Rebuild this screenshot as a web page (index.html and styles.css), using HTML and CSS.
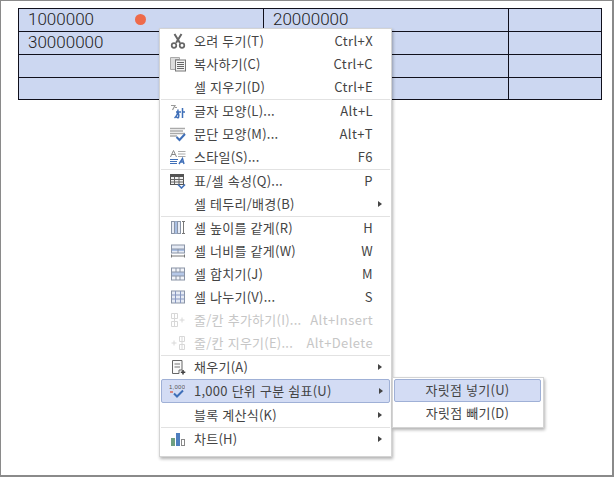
FILE: index.html
```html
<!DOCTYPE html>
<html lang="ko">
<head>
<meta charset="utf-8">
<title>표 메뉴</title>
<link rel="stylesheet" href="styles.css">
</head>
<body>
<div class="page">
  <table class="sheet">
    <tr class="r1"><td>1000000</td><td>20000000</td><td></td></tr>
    <tr class="r2"><td>30000000</td><td></td><td></td></tr>
    <tr class="r3"><td></td><td></td><td></td></tr>
    <tr class="r4"><td></td><td></td><td></td></tr>
  </table>
  <span class="dot"></span>

  <div class="menu main">
    <div class="item"><svg class="ic" viewBox="0 0 16 16"><path d="M4.500 1l5.500 9M11.500 1L6 10" stroke="#666" stroke-width="2" fill="none"/><circle cx="4" cy="12.500" r="2.300" fill="none" stroke="#666" stroke-width="1.700"/><circle cx="12" cy="12.500" r="2.300" fill="none" stroke="#666" stroke-width="1.700"/></svg><span class="lb">오려 두기(T)</span><span class="sc">Ctrl+X</span></div>
    <div class="item"><svg class="ic" viewBox="0 0 16 16"><path d="M.5 1.500h9v2h-4v10h-5z" fill="#ddd" stroke="#aaa"/><rect x="5.500" y="4" width="10" height="11" fill="#f4f4f4" stroke="#777"/><path d="M7 6.500h7M7 8.500h7M7 10.500h7M7 12.500h7" stroke="#666"/></svg><span class="lb">복사하기(C)</span><span class="sc">Ctrl+C</span></div>
    <div class="item"><span class="ic"></span><span class="lb">셀 지우기(D)</span><span class="sc">Ctrl+E</span></div>
    <div class="sep"></div>
    <div class="item"><svg class="ic" viewBox="0 0 16 16"><path d="M1 2.500h4L2.500 7M5 4.500h2" stroke="#999" fill="none" stroke-width="1.200"/><path d="M6 9h5M8 6.500c0 4-1.500 7-3.500 8.500M8 9c1 2 1 4 .5 5.500-1 .5-1.500 0-2-.5M12.500 5v10M12.500 9h2.500" stroke="#3f6fb8" fill="none" stroke-width="1.500"/></svg><span class="lb">글자 모양(L)...</span><span class="sc">Alt+L</span></div>
    <div class="item"><svg class="ic" viewBox="0 0 16 16"><path d="M0 2.500h15M0 5h13M0 7.500h15M0 10h7" stroke="#aaa" stroke-width="1.300"/><path d="M6.500 11l3 3 5.500-6" stroke="#3f6fb8" stroke-width="2" fill="none"/></svg><span class="lb">문단 모양(M)...</span><span class="sc">Alt+T</span></div>
    <div class="item"><svg class="ic" viewBox="0 0 16 16"><path d="M.5 8l3-6.500L6.500 8M2 5.500h3" stroke="#888" fill="none"/><path d="M8 2.500h7.500M8 5h7.500M8 7.500h7.500" stroke="#aaa"/><path d="M0 10.500h8M0 12.500h7M0 14.500h7" stroke="#3f6fb8"/><path d="M9 15l3.500-5.500 1.500 5.500M10.500 13h3.500" stroke="#3f6fb8" fill="none" stroke-width="1.400"/></svg><span class="lb">스타일(S)...</span><span class="sc">F6</span></div>
    <div class="sep"></div>
    <div class="item"><svg class="ic" viewBox="0 0 16 16"><rect x=".5" y="1.500" width="13" height="10" fill="#f2f2f2" stroke="#555"/><path d="M.5 1.500h13v2.500H.5z" fill="#555"/><path d="M.5 6.500h13M.5 9h13M4.500 4v7.500M9 4v7.500" stroke="#666"/><path d="M8 11.500l3.500 3.500 3.500-3.500" stroke="#3f6fb8" stroke-width="1.600" fill="none"/></svg><span class="lb">표/셀 속성(Q)...</span><span class="sc">P</span></div>
    <div class="item"><span class="ic"></span><span class="lb">셀 테두리/배경(B)</span><span class="ar"></span></div>
    <div class="sep"></div>
    <div class="item"><svg class="ic" viewBox="0 0 16 16"><rect x="1.500" y="1.500" width="9" height="12" fill="#e6ebf5" stroke="#8a94a6"/><rect x="4.500" y="1.500" width="3" height="12" fill="#a9bfe4"/><path d="M4.500 1.500v12M7.500 1.500v12" stroke="#8a94a6"/><path d="M12 1.500h3M12 13.500h3M13.500 1.500v12" stroke="#777"/></svg><span class="lb">셀 높이를 같게(R)</span><span class="sc">H</span></div>
    <div class="item"><svg class="ic" viewBox="0 0 16 16"><rect x="1.500" y="2" width="13" height="8" fill="#e6ebf5" stroke="#8a94a6"/><path d="M2 6h12v2H2z" fill="#a9bfe4"/><path d="M1.500 6h13M8 6v4" stroke="#8a94a6"/><path d="M1.500 11.500v3M14.500 11.500v3M1.500 13h13" stroke="#777"/></svg><span class="lb">셀 너비를 같게(W)</span><span class="sc">W</span></div>
    <div class="item"><svg class="ic" viewBox="0 0 16 16"><rect x="1.500" y="2" width="13" height="12" fill="#f3f5fa" stroke="#8a94a6"/><path d="M2 6h12v4H2z" fill="#b6c8e8"/><path d="M1.500 6h13M1.500 10h13M6 10v4M10 10v4M6 2v4M10 2v4" stroke="#8a94a6"/></svg><span class="lb">셀 합치기(J)</span><span class="sc">M</span></div>
    <div class="item"><svg class="ic" viewBox="0 0 16 16"><rect x="1.500" y="2" width="13" height="12" fill="#e6ebf5" stroke="#8a94a6"/><path d="M1.500 6h13M1.500 10h13M5.500 2v12M10.500 2v12" stroke="#8797c0"/></svg><span class="lb">셀 나누기(V)...</span><span class="sc">S</span></div>
    <div class="item off"><svg class="ic" viewBox="0 0 16 16"><path d="M1.500 1.500h6v5h-6zM1.500 9.500h6v5h-6zM4.500 1.500v13M9.500 8h5M12 5.500v5" stroke="#d8d8d8" fill="none"/></svg><span class="lb">줄/칸 추가하기(I)...</span><span class="sc">Alt+Insert</span></div>
    <div class="item off"><svg class="ic" viewBox="0 0 16 16"><path d="M9.500 1.500h5v5h-5zM9.500 9.500h5v5h-5zM12 1.500v13M1.500 8h5M4 5.500v5" stroke="#d8d8d8" fill="none"/></svg><span class="lb">줄/칸 지우기(E)...</span><span class="sc">Alt+Delete</span></div>
    <div class="sep"></div>
    <div class="item"><svg class="ic" viewBox="0 0 16 16"><path d="M2.500 1.500h9.500v9.500h-3v3.500h-6.500z" fill="#fafafa" stroke="#666"/><path d="M4.500 5h5.500M4.500 8h5.500" stroke="#777"/><path d="M13 11v4.500M10.800 13.200h4.500" stroke="#444" stroke-width="1.600"/></svg><span class="lb">채우기(A)</span><span class="ar"></span></div>
    <div class="item hot"><svg class="ic" viewBox="0 0 16 16"><text x="0" y="6" class="mini">1,000</text><path d="M1 9h3" stroke="#d96a5a" stroke-width="1.500"/><path d="M5 10.500l3 3 6-6" stroke="#3f6fb8" stroke-width="2" fill="none"/></svg><span class="lb">1,000 단위 구분 쉼표(U)</span><span class="ar"></span></div>
    <div class="item"><span class="ic"></span><span class="lb">블록 계산식(K)</span><span class="ar"></span></div>
    <div class="sep"></div>
    <div class="item"><svg class="ic" viewBox="0 0 16 16"><rect x="1" y="7" width="4" height="8" fill="#6f9f80"/><rect x="6" y="2" width="4" height="13" fill="#4f7fbf"/><rect x="11.500" y="8.500" width="3" height="6" fill="#fff" stroke="#888"/></svg><span class="lb">차트(H)</span><span class="ar"></span></div>
  </div>

  <div class="menu sub">
    <div class="subitem hot">자릿점 넣기(U)</div>
    <div class="subitem plain">자릿점 빼기(D)</div>
  </div>
</div>
</body>
</html>
```
FILE: styles.css
```css
* { box-sizing: border-box; }
html, body { margin: 0; padding: 0; background: #fff; }
body { font-family: "Noto Sans CJK KR", "Noto Sans", sans-serif; color: #444; }

.page {
  position: relative;
  width: 614px;
  height: 477px;
  padding: 7px 0 0 17px;
  border: 1px solid #8a8a8a;
  border-right-width: 2px;
  border-bottom-width: 2px;
  overflow: hidden;
}
.sheet {
  border-collapse: collapse;
  table-layout: fixed;
  width: 583px;
  background: #ccd7f1;
  font-family: "Roboto", "Noto Sans", sans-serif;
  font-size: 17px;
  font-weight: 300;
  line-height: 20px;
  color: #222;
}
.sheet td {
  border: 1px solid #10101c;
  padding: 0 0 2px 9px;
  width: 245px;
  white-space: nowrap;
  overflow: hidden;
}
.sheet td:last-child { width: 93px; }
.sheet .r1 { height: 23px; }
.sheet .r2 { height: 22px; }
.sheet .r3 { height: 23px; }
.sheet .r4 { height: 22px; }

.dot {
  position: absolute;
  left: 134px;
  top: 13px;
  width: 11px;
  height: 11px;
  border-radius: 50%;
  background: #ee6a4a;
}

.menu {
  position: absolute;
  background: #fff;
  border: 1px solid #d4d4d4;
  box-shadow: 1px 2px 3px rgba(0, 0, 0, .3);
  font-size: 13px;
}
.main {
  left: 158px;
  top: 27px;
  width: 233px;
  padding: 1px 1px 5px;
}
.item {
  display: flex;
  align-items: center;
  height: 23px;
  padding: 0 7px 2px 8px;
  margin: 0 1px;
  white-space: nowrap;
  line-height: 20px;
  letter-spacing: .25px;
}
.ic { width: 16px; height: 16px; flex: none; margin-right: 8px; display: block; }
.lb { flex: 1; }
.sc { padding-right: 9px; letter-spacing: .4px; }
.ar {
  width: 0;
  height: 0;
  border-left: 4px solid #444;
  border-top: 3px solid transparent;
  border-bottom: 3px solid transparent;
}
.off, .off .sc { color: #c6c6c6; }
.sep { height: 1px; background: #e2e2e2; }
.hot {
  background: #d3dcf4;
  border: 1px solid #9fb0d6;
  border-radius: 2px;
}
.item.hot { padding: 0 6px 0 7px; margin: 0 0 1px; height: 24px; }
.item.hot .ic { margin-right: 9px; }
.mini { font-size: 6px; fill: #555; font-family: "Liberation Sans", sans-serif; }

.sub {
  left: 391px;
  top: 376px;
  width: 152px;
  padding: 1px 2px 2px 1px;
}
.subitem {
  height: 23px;
  line-height: 20px;
  text-align: center;
  letter-spacing: .25px;
}
.subitem.plain { line-height: 22px; }
```
